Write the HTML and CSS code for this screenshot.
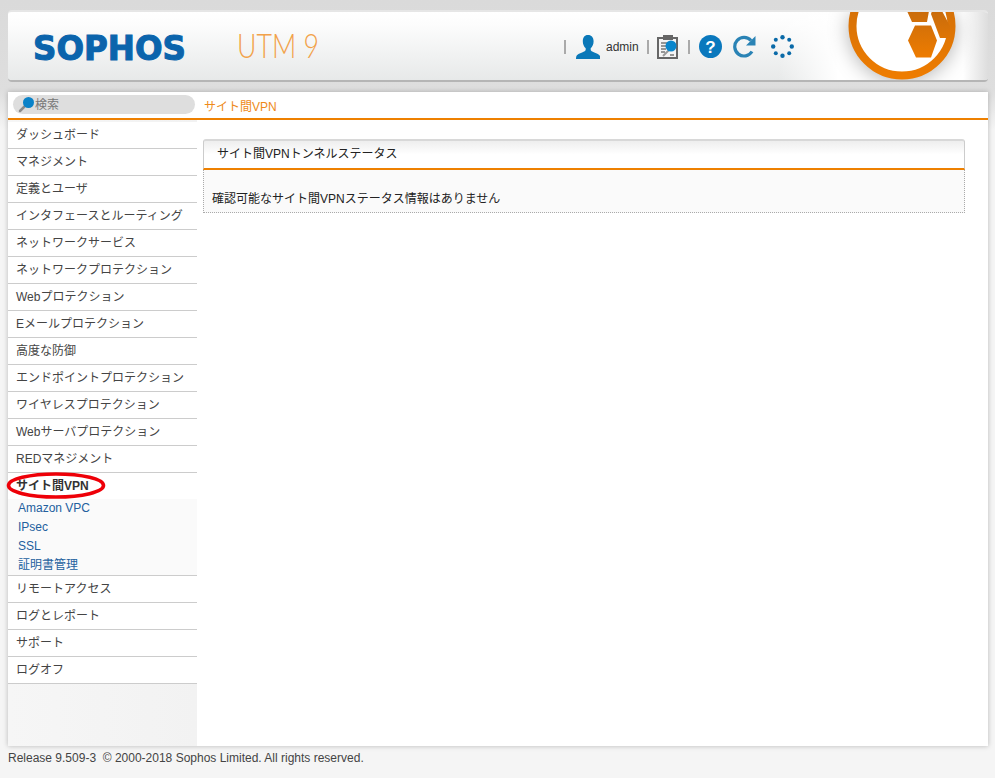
FILE: index.html
```html
<!DOCTYPE html>
<html lang="ja">
<head>
<meta charset="utf-8">
<title>Sophos UTM 9</title>
<link rel="stylesheet" href="styles.css">
</head>
<body>
<header class="header">
  <svg class="logo" width="170" height="44" viewBox="0 0 170 44"><text class="logo-text" x="2" y="35" textLength="153" lengthAdjust="spacingAndGlyphs">SOPHOS</text></svg>
  <svg class="product" width="120" height="48" viewBox="0 0 120 48"><text class="product-text" x="1" y="35" textLength="82" lengthAdjust="spacingAndGlyphs">UTM 9</text></svg>
  <div class="tools">
    <span class="sep"></span>
    <svg class="ico-user" width="24" height="24" viewBox="0 0 24 24"><path fill="#0a78b8" d="M12 0c3.600 0 5.600 2.600 5.600 6.200 0 3-1.200 5.600-2.900 7v1.600c0 1.200 1.400 1.700 3.600 2.600 2.600 1 5 1.800 5.700 3.600.3.900.4 2 .4 3H0c0-1 .1-2.100.4-3 .7-1.800 3.100-2.600 5.700-3.600 2.200-.9 3.600-1.400 3.600-2.600v-1.600c-1.700-1.400-2.900-4-2.900-7C6.800 2.600 8.400 0 12 0z"/></svg>
    <span class="admin">admin</span>
    <span class="sep"></span>
    <svg class="ico-clip" width="22" height="24" viewBox="0 0 22 24"><rect x="1" y="3" width="19" height="20" fill="#f4f4f4" stroke="#666" stroke-width="2"/><rect x="6" y="0" width="10" height="5" fill="#666"/><path d="M4 8h9M4 11h6M4 14h5M4 17h4M13 20h4" stroke="#777" stroke-width="1.300"/><path d="M6 21l6-6" stroke="#999" stroke-width="2"/><circle cx="14" cy="11" r="5.500" fill="#0a86cc"/></svg>
    <span class="sep sep-last"></span>
    <svg class="ico-help" width="23" height="23" viewBox="0 0 23 23"><circle cx="11.500" cy="11.500" r="11.500" fill="#0a78bd"/><text class="help-text" x="11.500" y="17.500" text-anchor="middle">?</text></svg>
    <svg class="ico-refresh" width="23" height="23" viewBox="0 0 23 23"><path d="M19 16.500a9.300 9.300 0 1 1-1-11" fill="none" stroke="#2a83b5" stroke-width="3.200"/><path d="M22.500 1v9.500h-9.500z" fill="#2a83b5"/></svg>
    <svg class="ico-spin" width="23" height="23" viewBox="0 0 23 23" fill="#0a6aa8"><circle cx="11.500" cy="2.200" r="2.200"/><circle cx="18.200" cy="4.800" r="2"/><circle cx="20.800" cy="11.500" r="2.200"/><circle cx="18.200" cy="18.200" r="2"/><circle cx="11.500" cy="20.800" r="2.200"/><circle cx="4.800" cy="18.200" r="2"/><circle cx="2.200" cy="11.500" r="2.200"/><circle cx="4.800" cy="4.800" r="2"/></svg>
  </div>
  <div class="badge-glow"></div>
  <svg class="badge" width="127" height="74" viewBox="0 0 127 74">
    <defs><linearGradient id="org" x1="0" y1="0" x2="0" y2="1"><stop offset="0" stop-color="#c96c0c"/><stop offset="1" stop-color="#ee7c00"/></linearGradient></defs>
    <circle cx="64" cy="14" r="49.500" fill="#fff" stroke="url(#org)" stroke-width="8"/>
    <path fill="url(#org)" d="M70 28.500l7-15h16l6 15-6 17H78zM69-1l5 11h15l2-11zM94-1l-1 3 9 24h10v-12l-8-15z"/>
  </svg>
</header>
<main class="main">
  <div class="topbar">
    <div class="search">
      <svg class="search-ico" width="17" height="17" viewBox="0 0 17 17"><path d="M2 15l5-5" stroke="#8a8a8a" stroke-width="2.500" stroke-linecap="round"/><circle cx="10.500" cy="6.500" r="5.500" fill="#0a82c8"/></svg>
      <span class="search-text">検索</span>
    </div>
    <div class="crumb">サイト間VPN</div>
  </div>
  <div class="content">
    <nav class="nav">
      <ul class="menu">
        <li class="item">ダッシュボード</li>
        <li class="item">マネジメント</li>
        <li class="item">定義とユーザ</li>
        <li class="item">インタフェースとルーティング</li>
        <li class="item">ネットワークサービス</li>
        <li class="item">ネットワークプロテクション</li>
        <li class="item">Webプロテクション</li>
        <li class="item">Eメールプロテクション</li>
        <li class="item">高度な防御</li>
        <li class="item">エンドポイントプロテクション</li>
        <li class="item">ワイヤレスプロテクション</li>
        <li class="item">Webサーバプロテクション</li>
        <li class="item">REDマネジメント</li>
        <li class="group">
          <div class="group-title">サイト間VPN
            <svg class="circle" width="102" height="30" viewBox="0 0 102 30"><ellipse cx="51" cy="14.500" rx="47.500" ry="11.500" fill="none" stroke="#ee0008" stroke-width="3.600"/></svg>
          </div>
          <ul class="sub">
            <li class="sub-item">Amazon VPC</li>
            <li class="sub-item">IPsec</li>
            <li class="sub-item">SSL</li>
            <li class="sub-item">証明書管理</li>
          </ul>
        </li>
        <li class="item">リモートアクセス</li>
        <li class="item">ログとレポート</li>
        <li class="item">サポート</li>
        <li class="item">ログオフ</li>
      </ul>
    </nav>
    <section class="page">
      <div class="panel">
        <h2 class="panel-title">サイト間VPNトンネルステータス</h2>
        <div class="panel-body">確認可能なサイト間VPNステータス情報はありません</div>
      </div>
    </section>
  </div>
</main>
<footer class="footer">Release 9.509-3&nbsp; © 2000-2018 Sophos Limited. All rights reserved.</footer>
</body>
</html>
```
FILE: styles.css
```css
* { box-sizing: border-box; }
html, body { margin: 0; height: 100%; overflow: hidden; }
body {
  display: flex;
  flex-direction: column;
  padding: 10px 7px 0 8px;
  background: linear-gradient(#dadada 0, #dedede 90px, #f5f5f5 130px);
  font-family: "Liberation Sans", "Noto Sans CJK JP", sans-serif;
  font-size: 12px;
  color: #333;
}
.header {
  position: relative;
  flex: none;
  display: flex;
  align-items: center;
  height: 72px;
  padding-top: 1px;
  border-top: 2px solid #e6e6e6;
  border-bottom: 2px solid #b5b5b5;
  border-radius: 4px;
  background: linear-gradient(#fff 0, #fcfcfc 20%, #e7e9e9 100%);
  overflow: hidden;
}
.logo { flex: none; margin-left: 23px; }
.logo-text {
  font-family: "DejaVu Sans", sans-serif;
  font-weight: 700;
  font-size: 34px;
  fill: #0b64ac;
  stroke: #0b64ac;
  stroke-width: 1.1px;
}
.product { flex: none; margin-left: 35px; }
.product-text {
  font-family: "Lato", sans-serif;
  font-weight: 300;
  font-size: 33px;
  fill: #f2a24a;
}
.tools {
  display: flex;
  align-items: center;
  margin-left: 208px;
  height: 24px;
  z-index: 2;
}
.sep { width: 2px; height: 14px; background: #aaa; }
.ico-user { margin-left: 10px; }
.admin { margin: 0 8px 0 6px; color: #333; }
.ico-clip { margin-left: 8px; }
.sep-last { margin-left: 9px; }
.ico-help { margin-left: 9px; }
.help-text { font-family: "Liberation Sans", sans-serif; font-weight: 700; font-size: 17px; fill: #fff; }
.ico-refresh { margin-left: 11px; }
.ico-spin { margin-left: 15px; }
.badge-glow {
  position: absolute;
  left: 770px;
  right: 0;
  top: 0;
  bottom: 0;
  background: linear-gradient(90deg, rgba(255,255,255,0), #fff 60px, #fff 185px, #ddd);
}
.badge { position: absolute; left: 830px; top: 0; filter: drop-shadow(0 2px 10px rgba(0,0,0,0.3)); }
.main {
  flex: none;
  display: flex;
  flex-direction: column;
  height: 654px;
  margin-top: 10px;
  background: #fff;
  box-shadow: 0 0 5px rgba(0,0,0,0.25);
}
.topbar {
  flex: none;
  display: flex;
  align-items: center;
  height: 28px;
  border-bottom: 2px solid #ee8000;
  padding: 0 0 2px 5px;
}
.search {
  display: flex;
  align-items: center;
  width: 182px;
  height: 19px;
  border-radius: 10px;
  background: #dedede;
  padding-left: 5px;
}
.search-text { margin-top: -2px; color: #777; }
.crumb { margin: 2px 0 0 9px; color: #ee8a1a; }
.content { flex: 1; display: flex; min-height: 0; }
.nav {
  flex: none;
  width: 189px;
  background: linear-gradient(90deg, #f6f6f6, #f2f2f2);
}
.menu, .sub { list-style: none; margin: 0; padding: 0; }
.menu { padding-top: 2px; }
.item, .group { background: #fff; border-bottom: 1px solid #ccc; }
.item { height: 27px; line-height: 27px; padding-left: 8px; color: #444; }
.group-title {
  position: relative;
  height: 26px;
  line-height: 27px;
  padding-left: 8px;
  font-weight: 700;
  color: #333;
}
.circle { position: absolute; left: -3px; top: -2px; }
.sub { background: #fafafa; height: 76px; padding-top: 1px; }
.sub-item { height: 19px; line-height: 17px; padding-left: 10px; color: #22609e; }
.page { flex: 1; padding: 19px 23px 0 6px; }
.panel { width: 762px; }
.panel-title {
  margin: 0;
  height: 31px;
  line-height: 27px;
  padding-left: 13px;
  font-size: 12px;
  font-weight: 400;
  color: #222;
  border-top: 2px solid #d8d8d8;
  border-left: 1px solid #ccc;
  border-right: 1px solid #ccc;
  border-bottom: 2px solid #ee8000;
  border-radius: 3px 3px 0 0;
  background: linear-gradient(#eeeeee, #fff 50%);
}
.panel-body {
  height: 43px;
  padding: 21px 0 0 8px;
  line-height: 16px;
  color: #222;
  background: #fafafa;
  border: 1px dotted #aaa;
  border-top: 0;
}
.footer { flex: none; padding-top: 5px; line-height: 14px; color: #444; }
```
